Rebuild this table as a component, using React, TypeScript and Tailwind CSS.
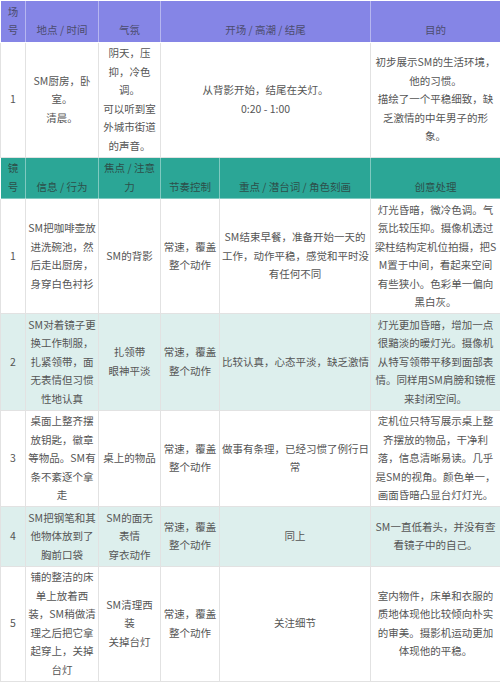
import { Fragment } from 'react';

type Cell = { lines: string[]; span?: number };
type Row = { cells: Cell[]; tint?: boolean };

const c = (...lines: string[]): Cell => ({ lines });

const sceneHead: Cell[] = [
  c('场', '号'),
  c('地点 / 时间'),
  c('气氛'),
  { lines: ['开场 / 高潮 / 结尾'], span: 2 },
  c('目的'),
];

const sceneRow: Cell[] = [
  c('1'),
  c('SM厨房，卧', '室。', '清晨。'),
  c('阴天，压', '抑，冷色', '调。', '可以听到室', '外城市街道', '的声音。'),
  { lines: ['从背影开始，结尾在关灯。', '0:20 - 1:00'], span: 2 },
  c('初步展示SM的生活环境，', '他的习惯。', '描绘了一个平稳细致，缺', '乏激情的中年男子的形', '象。'),
];

const shotHead: Cell[] = [
  c('镜', '号'),
  c('信息 / 行为'),
  c('焦点 / 注意', '力'),
  c('节奏控制'),
  c('重点 / 潜台词 / 角色刻画'),
  c('创意处理'),
];

const shots: Row[] = [
  {
    cells: [
      c('1'),
      c('SM把咖啡壶放', '进洗碗池，然', '后走出厨房，', '身穿白色衬衫'),
      c('SM的背影'),
      c('常速，覆盖', '整个动作'),
      c('SM结束早餐，准备开始一天的', '工作，动作平稳，感觉和平时没', '有任何不同'),
      c('灯光昏暗，微冷色调。气', '氛比较压抑。摄像机透过', '梁柱结构定机位拍摄，把S', 'M置于中间，看起来空间', '有些狭小。色彩单一偏向', '黑白灰。'),
    ],
  },
  {
    tint: true,
    cells: [
      c('2'),
      c('SM对着镜子更', '换工作制服，', '扎紧领带，面', '无表情但习惯', '性地认真'),
      c('扎领带', '眼神平淡'),
      c('常速，覆盖', '整个动作'),
      c('比较认真，心态平淡，缺乏激情'),
      c('灯光更加昏暗，增加一点', '很黯淡的暖灯光。摄像机', '从特写领带平移到面部表', '情。同样用SM肩膀和镜框', '来封闭空间。'),
    ],
  },
  {
    cells: [
      c('3'),
      c('桌面上整齐摆', '放钥匙，徽章', '等物品。SM有', '条不紊逐个拿', '走'),
      c('桌上的物品'),
      c('常速，覆盖', '整个动作'),
      c('做事有条理，已经习惯了例行日', '常'),
      c('定机位只特写展示桌上整', '齐摆放的物品，干净利', '落，信息清晰易读。几乎', '是SM的视角。颜色单一，', '画面昏暗凸显台灯灯光。'),
    ],
  },
  {
    tint: true,
    cells: [
      c('4'),
      c('SM把钢笔和其', '他物体放到了', '胸前口袋'),
      c('SM的面无', '表情', '穿衣动作'),
      c('常速，覆盖', '整个动作'),
      c('同上'),
      c('SM一直低着头，并没有查', '看镜子中的自己。'),
    ],
  },
  {
    cells: [
      c('5'),
      c('铺的整洁的床', '单上放着西', '装，SM稍做清', '理之后把它拿', '起穿上，关掉', '台灯'),
      c('SM清理西', '装', '关掉台灯'),
      c('常速，覆盖', '整个动作'),
      c('关注细节'),
      c('室内物件，床单和衣服的', '质地体现他比较倾向朴实', '的审美。摄影机运动更加', '体现他的平稳。'),
    ],
  },
];

function Lines({ lines }: { lines: string[] }) {
  return (
    <>
      {lines.map((l, i) => (
        <Fragment key={i}>
          {i > 0 && <br />}
          {l}
        </Fragment>
      ))}
    </>
  );
}

function HeadRow({ cells, bg, text }: { cells: Cell[]; bg: string; text: string }) {
  return (
    <tr className={bg}>
      {cells.map((cell, i) => (
        <th
          key={i}
          colSpan={cell.span}
          className={`border border-white/40 px-[2px] pt-[1.5px] pb-[2px] align-bottom font-normal whitespace-nowrap ${text}`}
        >
          <Lines lines={cell.lines} />
        </th>
      ))}
    </tr>
  );
}

function BodyRow({ cells, tint }: Row) {
  return (
    <tr className={tint ? 'bg-[#ddefed]' : 'bg-white'}>
      {cells.map((cell, i) => (
        <td
          key={i}
          colSpan={cell.span}
          className="border border-[#e2e2e2] px-[2px] py-[1.5px] text-center align-middle whitespace-nowrap text-[#555]"
        >
          <Lines lines={cell.lines} />
        </td>
      ))}
    </tr>
  );
}

export default function App() {
  return (
    <div className="w-[500px] h-[685px] overflow-hidden bg-white font-['Noto_Sans_CJK_SC','Noto_Sans',sans-serif] text-[10.5px] leading-[18.5px]">
      <table className="w-[500px] table-fixed border-collapse">
        <colgroup>
          <col className="w-[25px]" />
          <col className="w-[73px]" />
          <col className="w-[62px]" />
          <col className="w-[59px]" />
          <col className="w-[151px]" />
          <col className="w-[130px]" />
        </colgroup>
        <tbody>
          <HeadRow cells={sceneHead} bg="bg-[#8585e6]" text="text-[#4c4c6e]" />
          <BodyRow cells={sceneRow} />
          <HeadRow cells={shotHead} bg="bg-[#2ba696]" text="text-[#2d4f4a]" />
          {shots.map((row, i) => (
            <BodyRow key={i} cells={row.cells} tint={row.tint} />
          ))}
        </tbody>
      </table>
    </div>
  );
}
